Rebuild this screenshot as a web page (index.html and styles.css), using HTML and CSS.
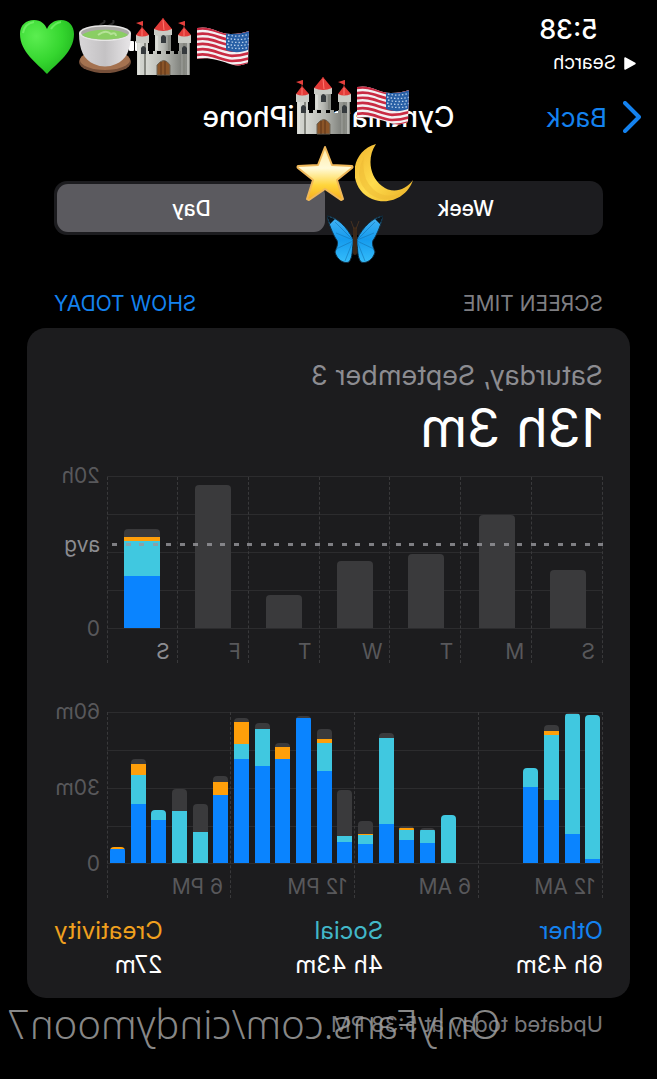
FILE: index.html
```html
<!DOCTYPE html>
<html lang="en">
<head>
<meta charset="utf-8">
<meta name="viewport" content="width=device-width, initial-scale=1">
<title>Screen Time</title>
<link rel="stylesheet" href="styles.css">
</head>
<body>
<svg class="defs" aria-hidden="true">
  <defs>
    <radialGradient id="g-heart" cx=".3" cy=".3" r=".8"><stop offset="0" stop-color="#5bee50"/><stop offset=".6" stop-color="#35d62f"/><stop offset="1" stop-color="#20b51e"/></radialGradient>
    <linearGradient id="g-cup"><stop offset="0" stop-color="#d8d6d8"/><stop offset=".5" stop-color="#c4c2c4"/><stop offset="1" stop-color="#e8e6e8"/></linearGradient>
    <linearGradient id="g-stone"><stop offset="0" stop-color="#d6d8d2"/><stop offset=".55" stop-color="#b4b6b0"/><stop offset="1" stop-color="#81837e"/></linearGradient>
    <linearGradient id="g-star" x2="0" y2="1"><stop offset="0" stop-color="#ffe9a0"/><stop offset=".4" stop-color="#fffad8"/><stop offset=".72" stop-color="#ffd53c"/><stop offset="1" stop-color="#f7ae1d"/></linearGradient>
    <linearGradient id="g-moon" x2="1" y2="1"><stop offset="0" stop-color="#f0b52e"/><stop offset=".5" stop-color="#ffdc4d"/><stop offset="1" stop-color="#e9ae25"/></linearGradient>
    <linearGradient id="g-wing" x2="0" y2="1"><stop offset="0" stop-color="#45b4f5"/><stop offset=".5" stop-color="#159bee"/><stop offset="1" stop-color="#35bdfb"/></linearGradient>
    <clipPath id="c-flag"><path d="M1 1C15-2 22 7 35 7c7 0 12-1 18-3l-1 32c-13 6-20-1-31-3-8-2-14-2-20-1z"/></clipPath>
    <symbol id="castle" viewBox="0 0 56 60">
      <path d="M6 13V4M48 13V4M27 6V1" stroke="#812b26"/><path d="M7 4L0 6l7 3zM49 4l-7 2 7 3z" fill="#e43f3c"/>
      <path d="M19 12h16v22H19z" fill="url(#g-stone)"/>
      <path d="M1 18h11v40H1zM43 18h11v40H43z" fill="url(#g-stone)"/>
      <path d="M10 34h3v3h4v-3h4v3h4v-3h5v3h4v-3h4v3h4v-3h3v24H10z" fill="url(#g-stone)"/>
      <path d="M0 18h13v8H0zM42 18h13v8H42zM18 12h18v6H18z" fill="#c9cbc5"/>
      <path d="M3 26v32M52 26v32M21 19v14" stroke="#e7e8e3"/>
      <path d="M9 26v32M48 26v32M33 19v14" stroke="#858780" stroke-width="2"/>
      <path d="M27 1l9 11q-9 4-18 0zM6 10l7 8q-7 3-13 0zM48 10l7 8q-7 3-13 0z" fill="#e23b38"/>
      <path d="M27 3l1 10M6 12v7M48 12v7" stroke="#ff7971"/>
      <path d="M25 20q2-4 5 0v6h-5zM5 31q2-4 5 0v6H5zM46 31q2-4 5 0v6h-5z" fill="#34393c"/>
      <path d="M21 58V48q7-9 13 0v10z" fill="#8b5528" stroke="#6d6557"/><path d="M25 45v13M29 44v14" stroke="#5c3518"/>
    </symbol>
    <symbol id="flag" viewBox="0 0 54 40">
      <g clip-path="url(#c-flag)"><path fill="#f3f0f2" d="M0 0h54v40H0z"/>
      <g fill="none" stroke="#c92b43" stroke-width="2.7"><path d="M0 2c15-3 23 5 36 6 7 0 12-1 18-3M0 7.200c15-3 23 5 36 6 7 0 12-1 18-3M0 12.400c15-3 23 5 36 6 7 0 12-1 18-3M0 17.600c15-3 23 5 36 6 7 0 12-1 18-3M0 22.800c15-3 23 5 36 6 7 0 12-1 18-3M0 28c15-3 23 5 36 6 7 0 12-1 18-3M0 33c15-3 23 5 36 6 7 0 12-1 18-3"/></g>
      <path d="M30 5c8 3 16 2 24-1v18c-9 4-16 4-24 1z" fill="#285fa5"/>
      <g fill="none" stroke="#b9d0eb" stroke-width="1.300" stroke-dasharray="1.500 2"><path d="M32 8c8 2 15 1 22-1M31 11c8 2 15 2 23 0M32 14c8 2 15 2 22 0M31 17c8 2 15 2 23 0M32 20c8 2 15 2 22 0"/></g></g>
    </symbol>
  </defs>
</svg>

<div class="screen">
  <header class="status">
    <time class="clock">5:38</time>
    <a class="return" href="#"><svg width="12" height="13" viewBox="0 0 12 13" aria-hidden="true"><path d="M11 1v11L1 6.500z" fill="#fff" stroke="#fff" stroke-width="1.500" stroke-linejoin="round"/></svg>Search</a>
    <div class="signal"><i></i><i></i></div>
    <div class="status-stickers">
      <svg class="sticker" width="54" height="40"><use href="#flag"/></svg>
      <svg class="sticker" width="56" height="60"><use href="#castle"/></svg>
      <svg class="sticker" width="54" height="54" viewBox="0 0 54 54">
        <path d="M23 8c-4-5 6-4 3-8M31 8c-3-4 7-3 4-8" stroke="#292929" stroke-width="2" fill="none"/>
        <ellipse cx="27" cy="42" rx="26" ry="11" fill="#76503a"/><ellipse cx="27" cy="40" rx="25" ry="10" fill="#a47250"/>
        <path d="M1 13h52c0 17-5 27-15 31q-11 5-22 0C6 40 1 30 1 13z" fill="url(#g-cup)"/>
        <ellipse cx="27" cy="13" rx="26" ry="8" fill="#e6e5e5"/><ellipse cx="27" cy="13" rx="24" ry="6.500" fill="#aaa9a6"/>
        <path d="M4 15c8-7 38-7 46 0-8 6-38 6-46 0z" fill="#8ace63"/><path d="M20 15q8-6 13-1 5-2 5 2" stroke="#b5e297" fill="none" stroke-width="2"/>
      </svg>
      <svg class="sticker" width="54" height="54" viewBox="0 0 54 54"><path d="M27 54C17 43 0 32 0 14 0 5 6 0 14 0c7 0 11 4 13 9C29 4 34 0 41 0c8 0 13 6 13 14 0 18-17 29-27 40z" fill="url(#g-heart)"/><path d="M3 13C4 6 8 3 14 2M31 9q4-6 10-7" stroke="#83f978" stroke-width="2" fill="none" opacity=".6"/></svg>
    </div>
  </header>

  <nav class="nav">
    <a class="back" href="#"><svg width="19" height="32" viewBox="0 0 19 32" aria-hidden="true"><path d="M17 2L3 16l14 14" fill="none" stroke="currentColor" stroke-width="4" stroke-linecap="round" stroke-linejoin="round"/></svg>Back</a>
    <h1 class="title"><span>Cynthia’s</span><span>iPhone</span></h1>
    <div class="title-stickers">
      <div class="sticker-row row-top"><svg class="sticker" width="54" height="40"><use href="#flag"/></svg><svg class="sticker" width="56" height="60"><use href="#castle"/></svg></div>
      <div class="sticker-row">
        <svg class="sticker" width="58" height="58" viewBox="0 0 58 58"><path d="M21 0C-7 8-7 45 17 55c18 7 36-3 41-19-8 11-21 14-31 6C14 32 12 13 21 0z" fill="url(#g-moon)"/><path d="M9 13Q-3 36 15 50q16 11 32-1-18 7-29-4Q6 34 9 13z" fill="#edb933" opacity=".5"/></svg>
        <svg class="sticker" width="58" height="56" viewBox="0 0 58 56"><path d="M29 2l7 18 20 1q1 1 0 2L41 35l6 19-2 1-16-11-16 11-2-1 6-19L2 23q-1-1 0-2l20-1z" fill="url(#g-star)" stroke="#efb85a" stroke-width="2" stroke-linejoin="round"/></svg>
      </div>
      <svg class="sticker butterfly" width="56" height="50" viewBox="0 0 56 50">
        <path d="M26 24C20 12 10 2 0 1c2 9 6 18 9 23 3 3 1 8-1 13 2 8 9 12 14 10 4-5 3-13 4-17zM30 24C36 12 46 2 56 1c-2 9-6 18-9 23-3 3-1 8 1 13-2 8-9 12-14 10-4-5-3-13-4-17z" fill="url(#g-wing)" stroke="#123044"/>
        <path d="M0 1l8 3-5 5zM56 1l-8 3 5 5z" fill="#0c151c"/>
        <path d="M26 25L8 7M26 25L9 18M26 26L9 34M26 26l-8 20M30 25L48 7M30 25l17-7M30 26l17 8M30 26l8 20" stroke="#1575b5" opacity=".6"/>
        <path d="M28 14v24" stroke="#3b2818" stroke-width="4" stroke-linecap="round"/><path d="M27 14L24 6M29 14l3-8" stroke="#453121"/>
      </svg>
    </div>
  </nav>

  <main class="content">
    <div class="segments" role="group" aria-label="Period"><button type="button">Week</button><button type="button" class="on">Day</button></div>
    <div class="section-head"><h2>SCREEN TIME</h2><button type="button">SHOW TODAY</button></div>
    <section class="card">
      <p class="date">Saturday, September 3</p>
      <p class="total">13h 3m</p>
      <div class="chart">
        <div class="plot week" id="week"><div class="avg-line"></div></div>
        <div class="scale"><span>20h</span><span class="avg">avg</span><span>0</span></div>
        <div class="axis seven"><span>S</span><span>M</span><span>T</span><span>W</span><span>T</span><span>F</span><span class="current">S</span></div>
      </div>
      <div class="chart hourly">
        <div class="plot day" id="day"></div>
        <div class="scale even"><span>60m</span><span>30m</span><span>0</span></div>
        <div class="axis four"><span>12 AM</span><span>6 AM</span><span>12 PM</span><span>6 PM</span></div>
      </div>
      <dl class="legend">
        <div><dt class="t-other">Other</dt><dd>6h 43m</dd></div>
        <div><dt class="t-social">Social</dt><dd>4h 43m</dd></div>
        <div><dt class="t-creativity">Creativity</dt><dd>27m</dd></div>
      </dl>
    </section>
    <footer class="updated">Updated today at 5:38 PM</footer>
  </main>
  <div class="watermark">OnlyFans.com/cindymoon7</div>
</div>
<script src="charts.js"></script>
</body>
</html>
```

FILE: styles.css
```css
* { box-sizing: border-box; }
body { margin: 0; background: #000; color: #fff; font-family: Inter, "Liberation Sans", sans-serif; }
h1, h2, p, dl, dd { margin: 0; font-weight: 400; }
a { text-decoration: none; }
button { padding: 0; border: 0; background: none; color: inherit; font: inherit; }
svg { display: block; flex: none; }
.defs { position: absolute; width: 0; height: 0; }

/* Selfie-style mirrored view */
.screen { position: relative; min-height: 100vh; padding-bottom: 41px; overflow: hidden; transform: scaleX(-1); }
.sticker { transform: scaleX(-1); }

.status { position: relative; padding: 15px 21px 0; }
.clock { display: block; padding-left: 38px; font-size: 27px; font-weight: 500; line-height: 30px; }
.return { display: flex; align-items: center; gap: 8px; margin-top: 6px; color: #fff; font-size: 19px; font-weight: 400; line-height: 24px; }
.signal { position: absolute; top: 41px; right: 129px; display: flex; gap: 1px; }
.signal i { width: 5px; height: 10px; border-radius: 1px; background: #fff; }
.status-stickers { position: absolute; top: 17px; right: 20px; display: flex; align-items: center; gap: 4px; }

.nav { position: relative; display: flex; align-items: center; justify-content: center; height: 54px; margin-top: 15px; }
.back { position: absolute; left: 15px; display: flex; align-items: center; gap: 16px; color: #1482ef; font-size: 26px; }
.title { display: flex; gap: 37px; font-size: 28px; font-weight: 500; }
.title-stickers { position: absolute; z-index: 1; top: -14px; right: 296px; }
.sticker-row { display: flex; justify-content: flex-end; align-items: center; gap: 1px; }
.row-top { gap: 4px; margin-bottom: 8px; }
.butterfly { margin: 13px 0 0 30px; }

.content { padding: 37px 27px 0; }
.segments { display: grid; grid-template-columns: 1fr 1fr; column-gap: 6px; height: 54px; margin: 0 27px; padding: 3px; border-radius: 13px; background: #1c1c1f; }
.segments button { border-radius: 11px; font-size: 21px; font-weight: 500; }
.segments .on { background: #5b5a5f; }
.section-head { display: flex; justify-content: space-between; margin: 55px 27px 10px; font-size: 21px; line-height: 28px; }
.section-head h2 { color: #7e7e82; font-size: 21px; }
.section-head button { color: #1482ef; }

.card { padding: 34px 27px 16px; border-radius: 19px; background: #1c1c1e; }
.date { color: #8c8c91; font-size: 27px; line-height: 28px; }
.total { margin-top: 8px; font-size: 54px; line-height: 60px; }
.chart { display: grid; grid-template-columns: 1fr 46px; column-gap: 7px; margin-top: 18px; color: #58585b; font-size: 21px; }
.hourly { margin-top: 49px; }
.plot { position: relative; display: grid; align-items: end; justify-items: center; height: 153px;
  background: repeating-linear-gradient(#2c2c2e 0 1px, transparent 1px 38px); border-bottom: 1px solid #2c2c2e; }
.week { grid-template-columns: repeat(7, 1fr); }
.day { grid-template-columns: repeat(24, 1fr); height: 152px; }
.bar { position: relative; overflow: hidden; border-radius: 4px 4px 0 0; }
.week .bar { width: 36px; }
.day .bar { width: 15px; }
.bar i { display: block; }
.rest { background: #3a3a3c; }
.creativity { background: #ff9f0a; }
.social { background: #40c8e0; }
.other { background: #0a84ff; }
.avg-line { position: absolute; z-index: 1; top: 67px; left: 0; right: 5px; height: 3px;
  background: repeating-linear-gradient(90deg, #98989d 0 5px, transparent 5px 13px, #98989d 13px 18px, transparent 18px 27px); opacity: .8; }
.scale { display: flex; flex-direction: column; justify-content: space-between; margin: -13px 0; line-height: 26px; }
.scale .avg { margin-top: 16px; margin-bottom: 31px; color: #8c8c91; }
.axis { position: relative; display: grid; grid-auto-rows: 34px; line-height: 46px; }
.axis span { position: relative; padding-left: 8px; }
.axis span::before, .axis::after { content: ""; position: absolute; top: -152px; bottom: 0; left: 0; border-left: 1px dashed #39393b; }
.axis::after { left: auto; right: 0; }
.axis .current { color: #8c8c91; }
.seven { grid-template-columns: repeat(7, 1fr); }
.four { grid-template-columns: repeat(4, 1fr); }
.legend { display: flex; justify-content: space-between; margin-top: 16px; font-size: 24px; line-height: 34px; }
.t-other { color: #1482ef; }
.t-social { color: #42b8c9; }
.t-creativity { color: #f0a01e; }
.updated { margin: 12px 27px 0; color: #78787c; font-size: 22px; line-height: 28px; }
.watermark { position: absolute; right: 7px; bottom: 29px; color: rgba(160, 160, 160, .85); font: 300 40px/52px "Noto Sans", sans-serif; white-space: nowrap; }
```

FILE: charts.js
```js
// Each bar lists its stacked heights: other, social, creativity, rest.
const week = [[0,0,0,58],[0,0,0,113],[0,0,0,74],[0,0,0,67],[0,0,0,33],[0,0,0,143],[52,35,4,8]];
const day = [
  [4,144,0,0],[29,120,0,1],[63,65,4,6],[76,19,0,0],[0,0,0,0],[0,0,0,0],
  [0,0,0,0],[0,48,0,0],[20,13,0,2],[23,10,2,2],[39,86,0,5],[19,9,1,13],
  [21,6,0,46],[92,28,4,10],[145,0,0,2],[104,0,12,4],[97,37,0,6],[104,15,22,4],
  [68,0,13,6],[0,31,0,28],[0,52,0,22],[43,10,0,0],[59,29,11,5],[14,0,2,0]
];
const kinds = ["other", "social", "creativity", "rest"];

function draw(id, bars) {
  const plot = document.getElementById(id);
  for (const values of bars) {
    const bar = document.createElement("div");
    bar.className = "bar";
    for (let k = 3; k >= 0; k--) {
      if (!values[k]) continue;
      const part = document.createElement("i");
      part.className = kinds[k];
      part.style.height = values[k] + "px";
      bar.append(part);
    }
    plot.append(bar);
  }
}

draw("week", week);
draw("day", day);
```
